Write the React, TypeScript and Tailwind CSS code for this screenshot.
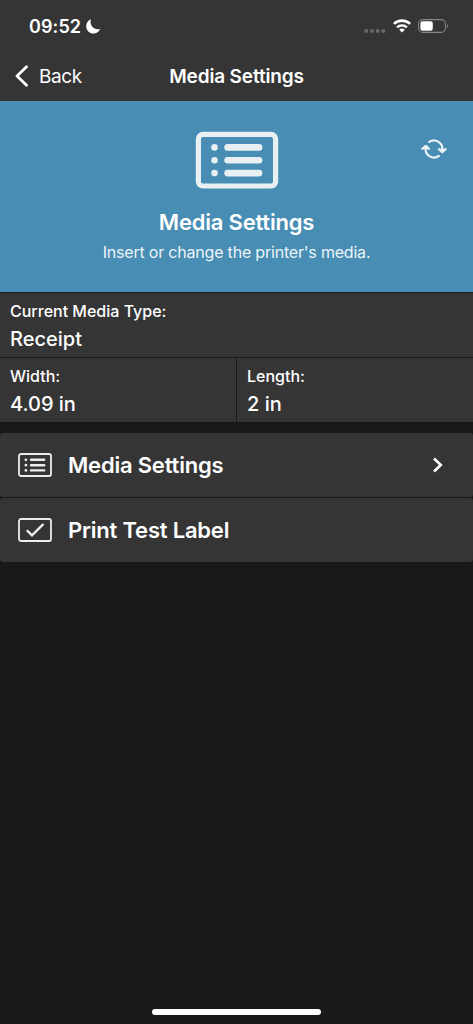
import type { ReactNode } from "react";

const readings = [
  ["Width:", "4.09 in"],
  ["Length:", "2 in"],
];

function ListIcon() {
  return (
    <svg width="34" height="24" viewBox="0 0 34 24" fill="none" stroke="#ededed" strokeLinecap="round">
      <rect x="1" y="1" width="32" height="22" rx="2" strokeWidth="1.8" />
      <path d="M13 6.8h13.2M13 12.2h13.2M13 17.4h13.2" strokeWidth="2.4" />
      <path d="M7.9 6.8h.01M7.9 12.2h.01M7.9 17.4h.01" strokeWidth="2.8" />
    </svg>
  );
}

function CheckIcon() {
  return (
    <svg width="34" height="24" viewBox="0 0 34 24" fill="none" stroke="#ededed" strokeLinecap="round">
      <rect x="1" y="1" width="32" height="22" rx="2" strokeWidth="1.8" />
      <path d="M9.5 12.9l4.5 4.4L24.8 6.6" strokeWidth="2.3" />
    </svg>
  );
}

function StatusBar() {
  return (
    <div className="flex h-[51px] items-center justify-between pt-px pr-[24px] pl-[29px]">
      <div className="flex items-center gap-[5px]">
        <span className="mt-px text-[18px] leading-6 font-semibold tracking-[0.1px]">09:52</span>
        <svg width="15" height="15" viewBox="0 0 15 15" fill="white">
          <path d="M4.9.3C2.1 1.3.2 4 .2 7.2c0 4.1 3.2 7.3 7.3 7.3 3 0 5.7-1.9 6.8-4.6C9.2 11.7 3 7.4 4.9.3z" />
        </svg>
      </div>
      <div className="flex items-center">
        <svg width="22" height="6" viewBox="0 0 22 6" fill="#6a6a6a" className="mt-[9px]">
          <circle cx="2.2" cy="3" r="2" />
          <circle cx="8" cy="3" r="2" />
          <circle cx="13.7" cy="3" r="2" />
          <circle cx="19.3" cy="3" r="2" />
        </svg>
        <svg width="18" height="14" viewBox="0 0 18 14" fill="none" stroke="white" strokeWidth="2.7" className="ml-[7px]">
          <path d="M.9 4.9a11.6 11.6 0 0 1 16.2 0" />
          <path d="M4.1 8.4a6.9 6.9 0 0 1 9.8 0" strokeWidth="2.4" />
          <path d="M9 13.6L6.2 10.8a4 4 0 0 1 5.6 0z" fill="white" stroke="none" />
        </svg>
        <svg width="31" height="14" viewBox="0 0 31 14" className="ml-[7px]">
          <rect x=".6" y=".6" width="26.8" height="12.8" rx="4.2" fill="none" stroke="#858585" strokeWidth="1.1" />
          <rect x="2.4" y="2.3" width="12.4" height="9.4" rx="2.3" fill="white" />
          <path d="M29 4.9c1.6.8 1.6 3.4 0 4.2z" fill="#858585" />
        </svg>
      </div>
    </div>
  );
}

function NavBar() {
  return (
    <div className="grid h-[50px] grid-cols-[120px_1fr_120px] items-center">
      <div className="flex items-center pl-[15px]">
        <svg width="14" height="22" viewBox="0 0 14 22" fill="none" stroke="white" strokeWidth="2.8" strokeLinecap="round" strokeLinejoin="round">
          <path d="M11.5 1.8L2 11l9.5 9.2" />
        </svg>
        <span className="mt-px ml-[10px] text-[19px] leading-6 tracking-[-0.4px]">Back</span>
      </div>
      <h1 className="mt-px text-center text-[19px] leading-6 font-semibold tracking-[-0.15px]">Media Settings</h1>
    </div>
  );
}

function Hero() {
  return (
    <section className="relative flex h-[191px] flex-col items-center bg-[#488db4] pt-[30px]">
      <svg width="84" height="58" viewBox="0 0 84 58" fill="none" stroke="#e8f0f4" strokeLinecap="round">
        <rect x="3.4" y="3.4" width="77.2" height="51.6" rx="4.5" strokeWidth="5.2" />
        <path d="M32.6 16.4h31.5M32.6 29.3h31.5M32.6 42.1h31.5" strokeWidth="6.6" />
        <path d="M19.5 16.4h.01M19.5 29.3h.01M19.5 42.1h.01" strokeWidth="6.6" />
      </svg>
      <h2 className="mt-[17px] text-[22px] leading-8 font-semibold tracking-[-0.2px]">Media Settings</h2>
      <p className="mt-[2px] text-[16px] leading-6 tracking-[-0.2px] text-[#edf4f7]">Insert or change the printer's media.</p>
      <svg width="26" height="20" viewBox="0 0 26 20" fill="none" stroke="#eaf2f6" strokeWidth="2.2" strokeLinecap="round" strokeLinejoin="round" className="absolute top-[38px] right-[26px]">
        <path d="M8.2 2.9A8.4 8.4 0 0 1 21.2 11.4M17.8 17A8.4 8.4 0 0 1 4.8 8.5" />
        <path d="M18 10.2l3.2 3 3.5-3-3.2 1zM1.3 9.8l3.5-3 3.2 3-3.5-1z" />
      </svg>
    </section>
  );
}

function Reading({ label, value }: { label: string; value: string }) {
  return (
    <div className="h-16 bg-[#353535] pt-[7px] pl-[10px]">
      <div className="text-[16px] leading-[22px] font-medium">{label}</div>
      <div className="mt-[3px] text-[20px] leading-7 font-medium">{value}</div>
    </div>
  );
}

function Row({ icon, title, arrow }: { icon: ReactNode; title: string; arrow?: boolean }) {
  return (
    <button className="flex h-16 w-full items-center rounded-[3px] bg-[#353535] pr-[29px] pl-[18px]">
      {icon}
      <span className="ml-4 text-[22px] leading-8 font-semibold tracking-[-0.2px]">{title}</span>
      {arrow && (
        <svg width="12" height="16" viewBox="0 0 12 16" fill="none" stroke="white" strokeWidth="2.6" className="ml-auto">
          <path d="M2 1.5L8.8 8 2 14.5" />
        </svg>
      )}
    </button>
  );
}

export default function App() {
  return (
    <main className="flex h-screen flex-col bg-[#191919] font-['Inter',sans-serif] text-white">
      <header className="bg-[#353535]">
        <StatusBar />
        <NavBar />
      </header>
      <Hero />
      <section className="mt-px grid gap-px">
        <Reading label="Current Media Type:" value="Receipt" />
        <div className="grid grid-cols-2 gap-px">
          {readings.map(([label, value]) => (
            <Reading key={label} label={label} value={value} />
          ))}
        </div>
      </section>
      <nav className="mt-[11px] grid gap-px">
        <Row icon={<ListIcon />} title="Media Settings" arrow />
        <Row icon={<CheckIcon />} title="Print Test Label" />
      </nav>
      <div className="mx-auto mt-auto mb-[9px] h-[6px] w-[169px] rounded-full bg-white" />
    </main>
  );
}
